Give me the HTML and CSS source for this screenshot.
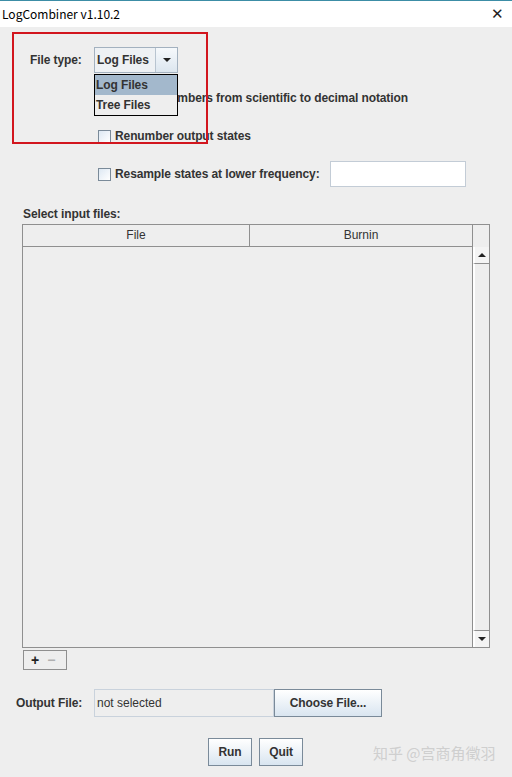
FILE: index.html
```html
<!DOCTYPE html>
<html lang="en">
<head>
  <meta charset="UTF-8">
  <title>LogCombiner v1.10.2</title>
  <link rel="stylesheet" href="styles.css">
</head>
<body>
  <div class="titlebar">
    <span class="title">LogCombiner v1.10.2</span>
    <span class="close">✕</span>
  </div>

  <div class="window">
    <!-- file type selector -->
    <div class="type-row">
      <span class="label">File type:</span>
      <div class="combo">
        <span class="combo-text">Log Files</span>
        <span class="combo-btn"><span class="tri-down"></span></span>
        <ul class="popup">
          <li class="selected">Log Files</li>
          <li>Tree Files</li>
        </ul>
      </div>
    </div>

    <div class="check-row first">
      <span class="checkbox"></span>
      <span class="label">Convert numbers from scientific to decimal notation</span>
    </div>
    <div class="check-row">
      <span class="checkbox"></span>
      <span class="label">Renumber output states</span>
    </div>
    <div class="check-row">
      <span class="checkbox"></span>
      <span class="label">Resample states at lower frequency:</span>
      <span class="field freq"></span>
    </div>

    <div class="section-label label">Select input files:</div>
    <div class="table">
      <div class="table-main">
        <div class="thead">
          <div class="th col-file">File</div>
          <div class="th col-burnin">Burnin</div>
        </div>
        <div class="tbody"></div>
      </div>
      <div class="vscroll">
        <div class="corner"></div>
        <div class="sb-btn"><span class="tri-up"></span></div>
        <div class="sb-track"></div>
        <div class="sb-btn"><span class="tri-down"></span></div>
      </div>
    </div>
    <div class="addremove">
      <span class="plus">+</span>
      <span class="minus">−</span>
    </div>

    <div class="output-row">
      <span class="label">Output File:</span>
      <span class="field out">not selected</span>
      <button class="btn choose">Choose File...</button>
    </div>

    <div class="actions">
      <button class="btn">Run</button>
      <button class="btn">Quit</button>
    </div>

    <div class="mark-box"></div>
    <div class="watermark">知乎 @宫商角徵羽</div>
  </div>
</body>
</html>
```

FILE: styles.css
```css
* {
  box-sizing: border-box;
}
body {
  margin: 0;
  width: 512px;
  height: 777px;
  overflow: hidden;
  background: #eeeeee;
  font-family: "Liberation Sans", Arial, sans-serif;
  font-size: 12px;
  color: #333333;
}

/* window caption */
.titlebar {
  height: 27px;
  background: #ffffff;
  border-top: 1px solid #3c8da6;
  display: flex;
  align-items: center;
  justify-content: space-between;
  padding: 0 8px 1px 2px;
  font-family: "Noto Sans CJK SC", "Noto Sans", sans-serif;
  color: #000;
}
.title {
  font-size: 12px;
}
.close {
  font-size: 15px;
  font-family: "DejaVu Sans", sans-serif;
  font-weight: 300;
  color: #222;
}

.window {
  position: relative;
  height: 750px;
  padding-top: 20px;
}
.label {
  font-weight: bold;
  color: #333;
  letter-spacing: -0.1px;
}

/* combo box */
.type-row {
  display: flex;
  align-items: center;
  height: 26px;
  padding-left: 30px;
}
.type-row > .label {
  width: 64px;
}
.combo {
  position: relative;
  display: flex;
  width: 84px;
  height: 26px;
  border: 1px solid #a3b1bf;
  background: #eef1f4;
}
.combo-text {
  flex: 1;
  padding: 5px 0 0 2px;
  font-weight: bold;
  color: #333;
  letter-spacing: -0.1px;
}
.combo-btn {
  width: 22px;
  border-left: 1px solid #b8c4d0;
  background: linear-gradient(#f6f9fc, #dce6ef);
  display: flex;
  align-items: center;
  justify-content: center;
}
.tri-down {
  width: 0;
  height: 0;
  border-left: 4px solid transparent;
  border-right: 4px solid transparent;
  border-top: 4px solid #222;
}
.tri-up {
  width: 0;
  height: 0;
  border-left: 4px solid transparent;
  border-right: 4px solid transparent;
  border-bottom: 4px solid #222;
}
.popup {
  position: absolute;
  top: 26px;
  left: -1px;
  width: 84px;
  margin: 0;
  padding: 0;
  list-style: none;
  background: #eeeeee;
  border: 1px solid #000;
  z-index: 2;
}
.popup li {
  height: 20px;
  padding: 3px 0 0 1px;
  font-weight: bold;
  color: #333;
  letter-spacing: -0.1px;
}
.popup li.selected {
  background: #a3b8cc;
}

/* option checkboxes */
.check-row {
  display: flex;
  align-items: center;
  height: 26px;
  margin-top: 12px;
  padding-left: 98px;
}
.check-row .label {
  margin-left: 4px;
}
.checkbox {
  width: 13px;
  height: 13px;
  border: 1px solid #7a8a99;
  background: linear-gradient(135deg, #dde8f3, #ffffff);
}
.field {
  height: 26px;
  background: #ffffff;
  border: 1px solid #c3ccd6;
}
.freq {
  width: 136px;
  margin-left: 10px;
}

/* input file table */
.section-label {
  margin: 20px 0 0 23px;
  height: 14px;
  line-height: 14px;
}
.table {
  display: flex;
  margin: 3px 0 0 22px;
  width: 468px;
  height: 424px;
  border: 1px solid #8f8f8f;
}
.table-main {
  flex: 1;
  display: flex;
  flex-direction: column;
}
.thead {
  display: flex;
  height: 22px;
  border-bottom: 1px solid #8f8f8f;
}
.th {
  text-align: center;
  line-height: 21px;
  color: #333;
}
.col-file {
  width: 227px;
  border-right: 1px solid #8f8f8f;
}
.col-burnin {
  flex: 1;
}
.tbody {
  flex: 1;
}
.vscroll {
  width: 17px;
  display: flex;
  flex-direction: column;
  border-left: 1px solid #8f8f8f;
}
.corner {
  height: 22px;
}
.sb-btn {
  height: 16px;
  display: flex;
  align-items: center;
  justify-content: center;
  background: #f4f4f4;
  border-left: 2px solid #ffffff;
}
.sb-track {
  flex: 1;
  border-top: 1px solid #8f8f8f;
  border-bottom: 1px solid #8f8f8f;
  border-left: 2px solid #ffffff;
}

.addremove {
  display: flex;
  align-items: center;
  gap: 8px;
  margin: 2px 0 0 23px;
  width: 44px;
  height: 20px;
  padding-left: 7px;
  border: 1px solid #8f8f8f;
  font-weight: bold;
  font-size: 14px;
}
.plus {
  color: #222;
}
.minus {
  color: #b0b0b0;
}

/* output file */
.output-row {
  display: flex;
  align-items: center;
  height: 28px;
  margin-top: 19px;
  padding-left: 16px;
}
.output-row > .label {
  width: 78px;
}
.out {
  width: 180px;
  height: 28px;
  background: #eeeeee;
  border: 1px solid #c9d2dc;
  padding: 6px 0 0 2px;
  color: #333;
}
.btn {
  height: 28px;
  padding: 0 10px;
  border: 1px solid #7a8a99;
  background: linear-gradient(#ffffff, #d9e5f0);
  font-family: "Liberation Sans", Arial, sans-serif;
  font-size: 12px;
  font-weight: bold;
  color: #333;
  letter-spacing: -0.1px;
}
.choose {
  width: 108px;
}

.actions {
  display: flex;
  justify-content: center;
  gap: 7px;
  margin-top: 21px;
  padding-right: 1px;
}
.actions .btn {
  width: 44px;
  padding: 0;
}

/* overlays */
.mark-box {
  position: absolute;
  left: 12px;
  top: 5px;
  width: 196px;
  height: 112px;
  border: 2px solid #d2161e;
  z-index: 3;
}
.watermark {
  position: absolute;
  left: 373px;
  top: 715px;
  font-family: "Noto Sans CJK SC", sans-serif;
  font-size: 15px;
  color: #cfcfcf;
}
```
